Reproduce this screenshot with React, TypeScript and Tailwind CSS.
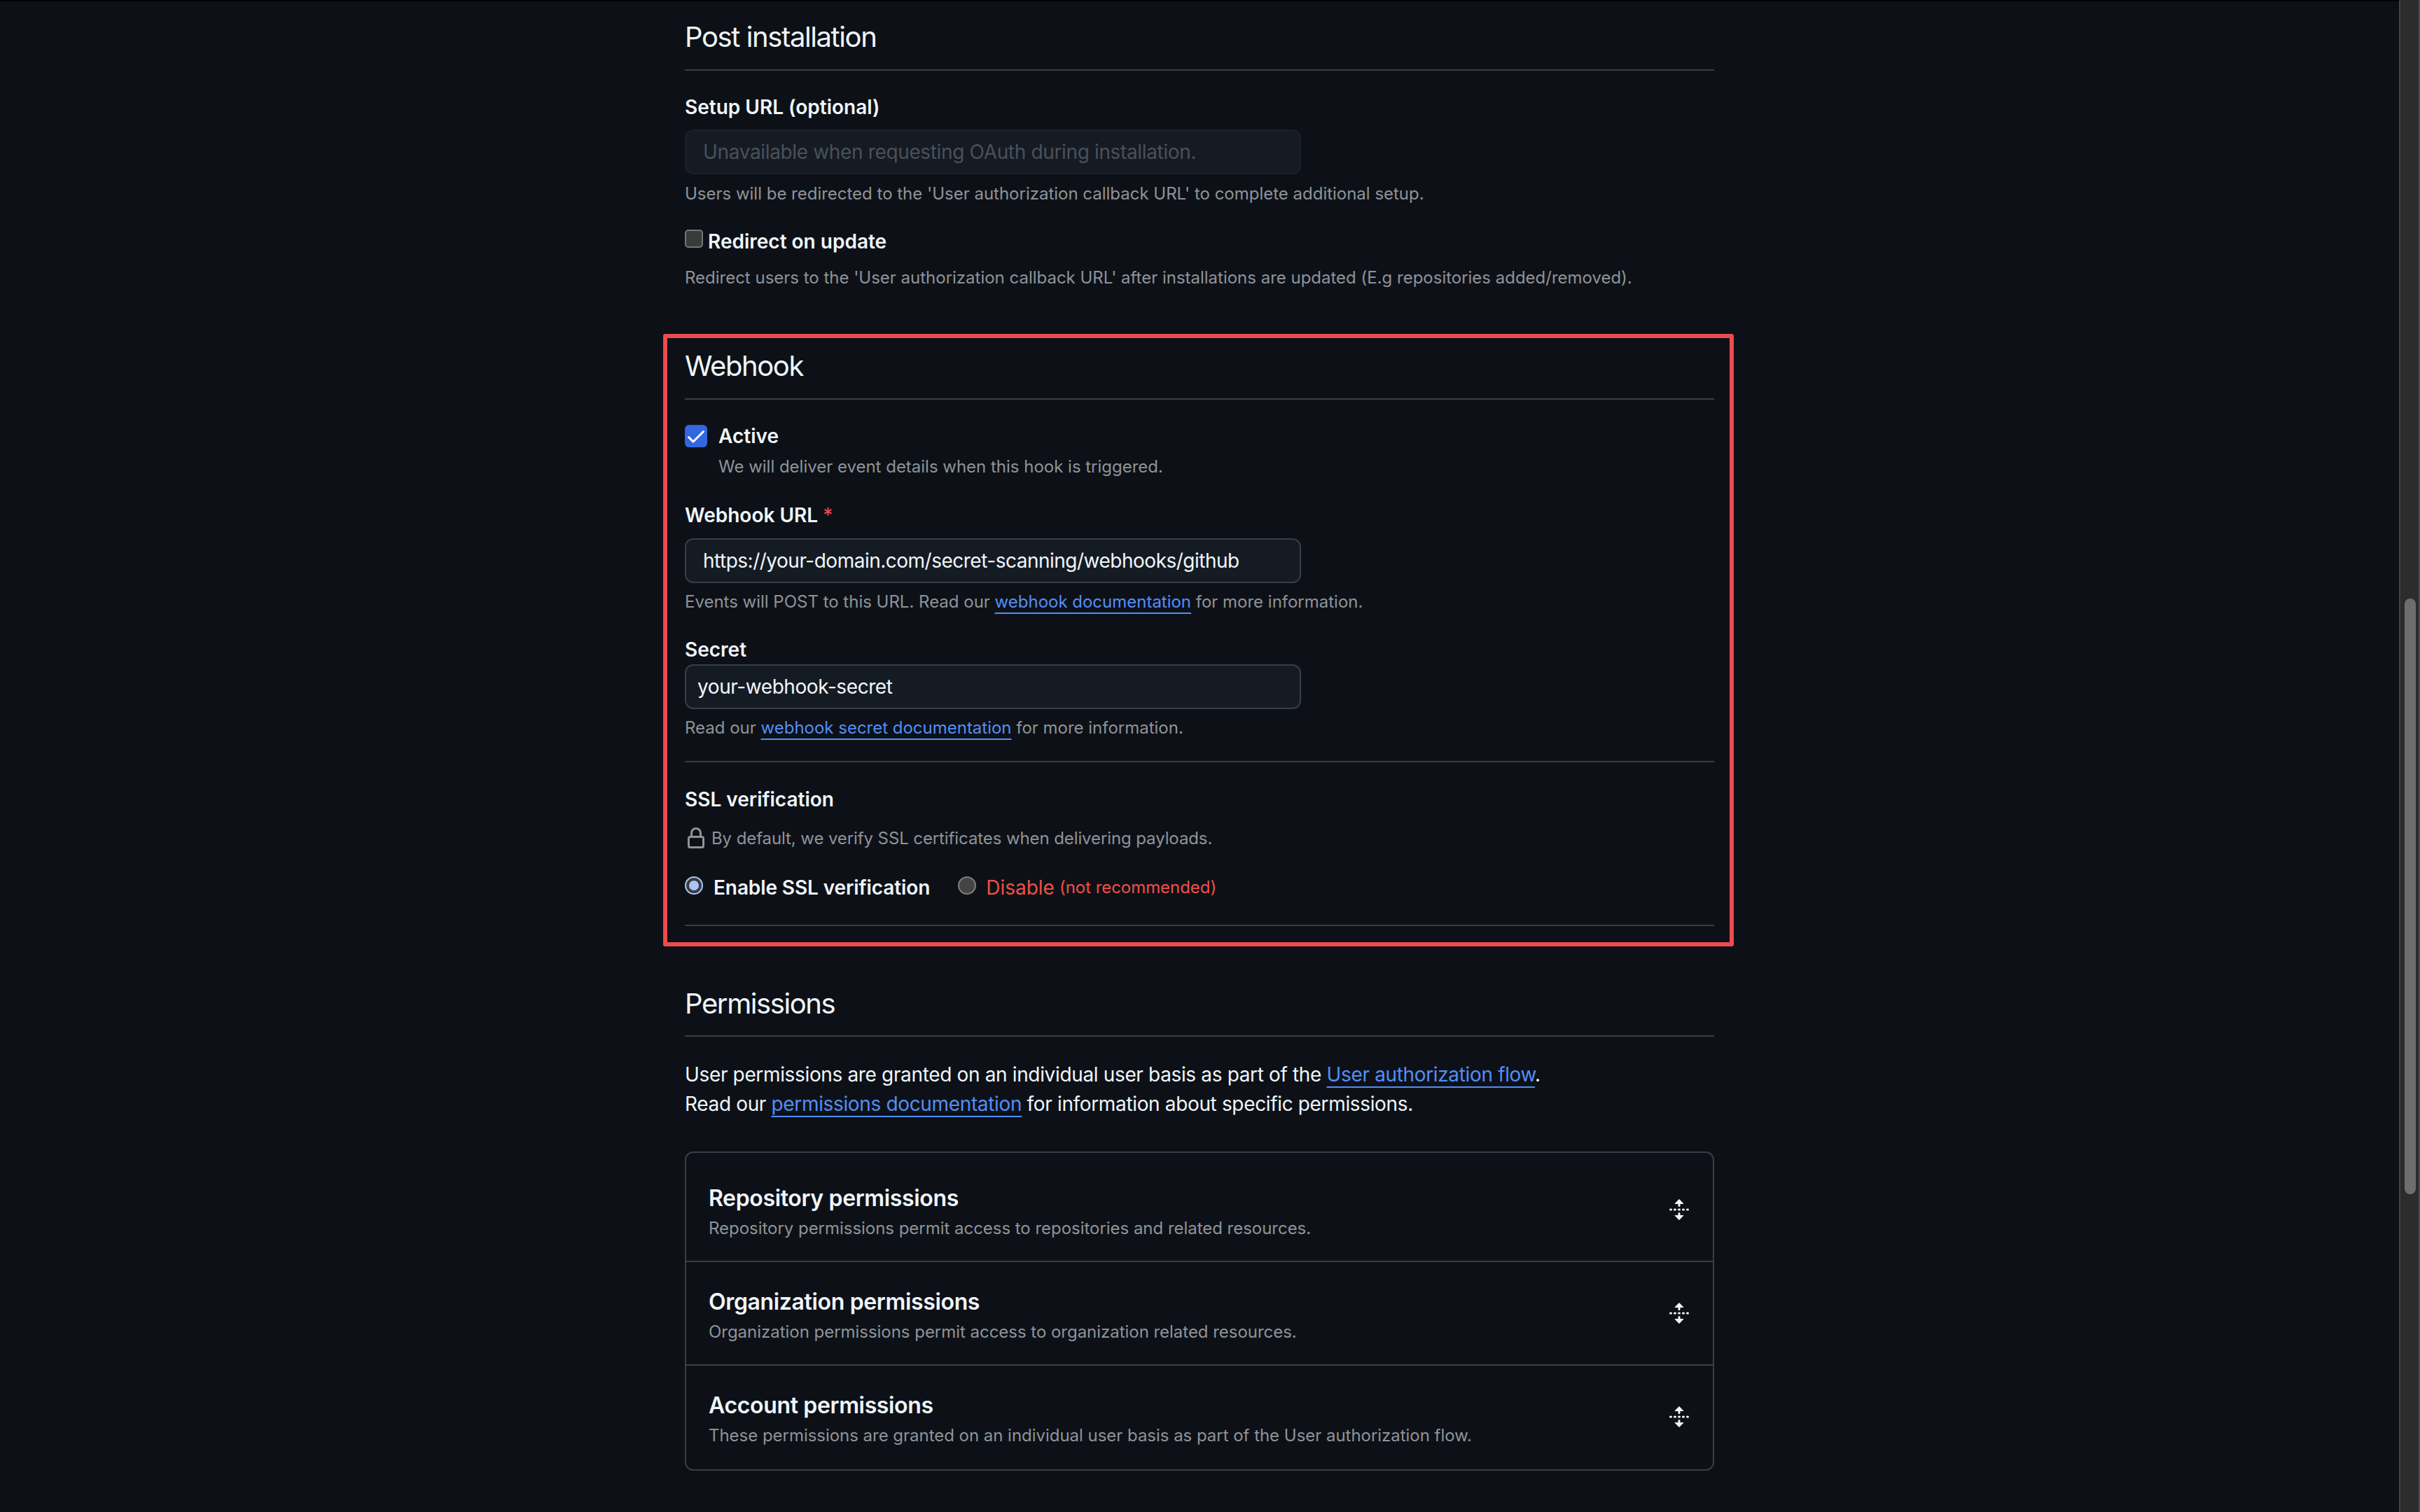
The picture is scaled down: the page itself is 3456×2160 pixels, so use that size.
import React from "react";

const Lock = () => (
  <svg viewBox="0 0 16 16" className="w-[32px] h-[32px] shrink-0 fill-[#8f9399]">
    <path d="M4 4a4 4 0 0 1 8 0v2h.25c.966 0 1.75.784 1.75 1.75v5.5A1.75 1.75 0 0 1 12.25 15h-8.5A1.75 1.75 0 0 1 2 13.25v-5.5C2 6.784 2.784 6 3.75 6H4Zm8.25 3.5h-8.5a.25.25 0 0 0-.25.25v5.5c0 .138.112.25.25.25h8.5a.25.25 0 0 0 .25-.25v-5.5a.25.25 0 0 0-.25-.25ZM10.5 6V4a2.5 2.5 0 1 0-5 0v2Z" />
  </svg>
);

const Unfold = () => (
  <svg viewBox="0 0 16 16" className="w-[32px] h-[32px] shrink-0 fill-[#f0f6fc]">
    <path d="m8.177.677 2.896 2.896a.25.25 0 0 1-.177.427H8.75v1.25a.75.75 0 0 1-1.5 0V4H5.104a.25.25 0 0 1-.177-.427L7.823.677a.25.25 0 0 1 .354 0ZM7.25 10.75a.75.75 0 0 1 1.5 0V12h2.146a.25.25 0 0 1 .177.427l-2.896 2.896a.25.25 0 0 1-.354 0l-2.896-2.896A.25.25 0 0 1 5.104 12H7.25v-1.25Zm-5-2a.75.75 0 0 0 0-1.5h-.5a.75.75 0 0 0 0 1.5h.5ZM6 8a.75.75 0 0 1-.75.75h-.5a.75.75 0 0 1 0-1.5h.5A.75.75 0 0 1 6 8Zm2.25.75a.75.75 0 0 0 0-1.5h-.5a.75.75 0 0 0 0 1.5h.5ZM12 8a.75.75 0 0 1-.75.75h-.5a.75.75 0 0 1 0-1.5h.5A.75.75 0 0 1 12 8Zm2.25.75a.75.75 0 0 0 0-1.5h-.5a.75.75 0 0 0 0 1.5h.5Z" />
  </svg>
);

const Heading = ({ children, pb = "pb-[16px]" }: { children: React.ReactNode; pb?: string }) => (
  <h2 className={`text-[40px] leading-[60px] font-normal tracking-[-1.4px] text-[#f0f6fc] border-b-2 border-[#3a3d45] ${pb}`}>{children}</h2>
);

const Label = ({ children, className = "" }: { children: React.ReactNode; className?: string }) => (
  <div className={`text-[28px] leading-[40px] font-semibold text-[#f0f6fc] ${className}`}>{children}</div>
);

const Help = ({ children, className = "" }: { children: React.ReactNode; className?: string }) => (
  <div className={`text-[24px] leading-[36px] tracking-[-0.01px] text-[#8f9399] ${className}`}>{children}</div>
);

const A = ({ children }: { children: React.ReactNode }) => (
  <a className="text-[#538ef5] underline underline-offset-[7px] decoration-2">{children}</a>
);

const Row = ({ title, desc }: { title: string; desc: string }) => (
  <div className="flex items-center justify-between h-[146px] pl-[32px] pr-[32px]">
    <div className="mt-[9px]">
      <div className="text-[32px] leading-[40px] font-semibold tracking-[-0.35px] text-[#f0f6fc]">{title}</div>
      <div className="mt-[5px] text-[24px] leading-[36px] tracking-[-0.03px] text-[#8f9399]">{desc}</div>
    </div>
    <Unfold />
  </div>
);

export default function App() {
  return (
    <div className="flex h-[2160px] w-full overflow-hidden bg-[#0d1117] [font-family:Inter,sans-serif]">
      <main className="flex-1 border-t-2 border-[#010409]">
        <div className="mx-auto w-[1470px]">
          <section className="pt-[21px]">
            <Heading>Post installation</Heading>
            <Label className="mt-[32px]">Setup URL (optional)</Label>
            <input
              disabled
              placeholder="Unavailable when requesting OAuth during installation."
              className="mt-[12px] block w-[880px] h-[64px] rounded-[12px] border-2 border-[#1c2128] bg-[#151b23] px-[24px] text-[28px] tracking-[-0.35px] placeholder:text-[#4b5058]"
            />
            <Help className="mt-[10px]">Users will be redirected to the 'User authorization callback URL' to complete additional setup.</Help>
            <div className="mt-[30px] flex items-center gap-[6px]">
              <span className="w-[26px] h-[26px] -mt-[8px] rounded-[5px] border-2 border-[#767676] bg-[#3b3b3b]" />
              <Label className="ml-[1px]">Redirect on update</Label>
            </div>
            <Help className="mt-[14px]">Redirect users to the 'User authorization callback URL' after installations are updated (E.g repositories added/removed).</Help>
          </section>

          <section className="mt-[62px] -ml-[31px] -mr-[28px] rounded-[3px] border-[6px] border-[#ee4b4e] pt-[10px] pl-[25px] pr-[22px] pb-[23px]">
            <Heading>Webhook</Heading>
            <div className="mt-[32px] flex items-center gap-[16px]">
              <span className="flex items-center justify-center w-[32px] h-[32px] rounded-[6px] bg-[#3367e0]">
                <svg viewBox="0 0 16 16" className="w-[32px] h-[32px] fill-white">
                  <path d="M13.78 4.22a.75.75 0 0 1 0 1.06l-7.25 7.25a.75.75 0 0 1-1.06 0L2.22 9.28a.751.751 0 0 1 .018-1.042.751.751 0 0 1 1.042-.018L6 10.94l6.72-6.72a.75.75 0 0 1 1.06 0Z" />
                </svg>
              </span>
              <Label>Active</Label>
            </div>
            <Help className="mt-[6px] pl-[48px]">We will deliver event details when this hook is triggered.</Help>
            <Label className="mt-[31px]">Webhook URL <span className="font-normal text-[#ee4b4e]">*</span></Label>
            <input
              readOnly
              value="https://your-domain.com/secret-scanning/webhooks/github"
              className="mt-[13px] block w-[880px] h-[64px] rounded-[12px] border-2 border-[#3a3d45] bg-[#151b23] px-[24px] text-[28px] tracking-[-0.5px] text-[#f0f6fc]"
            />
            <Help className="mt-[9px]">Events will POST to this URL. Read our <A>webhook documentation</A> for more information.</Help>
            <Label className="mt-[30px]">Secret</Label>
            <input
              readOnly
              value="your-webhook-secret"
              className="mt-[1px] block w-[880px] h-[64px] rounded-[12px] border-2 border-[#3a3d45] bg-[#151b23] px-[16px] text-[28px] tracking-[-0.42px] text-[#f0f6fc]"
            />
            <Help className="mt-[9px]">Read our <A>webhook secret documentation</A> for more information.</Help>
            <div className="mt-[29px] h-[2px] bg-[#3a3d45]" />
            <Label className="mt-[33px]">SSL verification</Label>
            <div className="mt-[18px] flex items-center gap-[6px]">
              <Lock />
              <Help className="tracking-[-0.1px]">By default, we verify SSL certificates when delivering payloads.</Help>
            </div>
            <div className="mt-[32px] flex items-center">
              <span className="w-[26px] h-[26px] -mt-[6px] rounded-full bg-[#a8c7fa] p-[2px]">
                <span className="block w-full h-full rounded-full border-[4px] border-[#3b3b3b] bg-[#a8c7fa]" />
              </span>
              <Label className="ml-[15px] tracking-[-0.1px]">Enable SSL verification</Label>
              <span className="ml-[40px] w-[26px] h-[26px] -mt-[6px] rounded-full border-2 border-[#7f7f7f] bg-[#444444]" />
              <span className="ml-[14px] text-[28px] leading-[40px] font-normal text-[#ee5048]">Disable</span>
              <span className="ml-[7px] text-[24px] leading-[40px] tracking-[-0.05px] text-[#ee5048]">(not recommended)</span>
            </div>
            <div className="mt-[33px] h-[2px] bg-[#3a3d45]" />
          </section>

          <section className="mt-[52px]">
            <Heading pb="pb-[15px]">Permissions</Heading>
            <p className="mt-[33px] text-[28px] leading-[42px] tracking-[-0.35px] text-[#f0f6fc]">
              User permissions are granted on an individual user basis as part of the <A>User authorization flow</A>.
              <br />
              Read our <A>permissions documentation</A> for information about specific permissions.
            </p>
            <div className="mt-[47px] rounded-[12px] border-2 border-[#3a3d45]">
              <div className="pt-[8px] border-b-2 border-[#3a3d45]">
                <Row title="Repository permissions" desc="Repository permissions permit access to repositories and related resources." />
              </div>
              <div className="border-b-2 border-[#3a3d45]">
                <Row title="Organization permissions" desc="Organization permissions permit access to organization related resources." />
              </div>
              <div className="pb-[2px]">
                <Row title="Account permissions" desc="These permissions are granted on an individual user basis as part of the User authorization flow." />
              </div>
            </div>
          </section>
        </div>
      </main>
      <aside className="w-[30px] shrink-0 bg-[#2c2c2c] border-l-2 border-[#424242] border-r-2 border-r-[#4a4a4a] pt-[855px] pl-[6px]">
        <div className="w-[16px] h-[851px] rounded-full bg-[#6e6e6e]" />
      </aside>
    </div>
  );
}
